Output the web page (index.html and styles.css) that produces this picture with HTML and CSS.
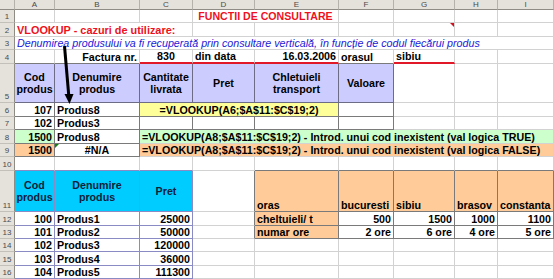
FILE: index.html
```html
<!DOCTYPE html>
<html>
<head>
<meta charset="utf-8">
<link rel="stylesheet" href="styles.css">
</head>
<body>
<div class="sheet">
  <!-- column headers -->
  <div class="c ch corner"></div>
  <div class="c ch">A</div><div class="c ch">B</div><div class="c ch">C</div><div class="c ch">D</div><div class="c ch">E</div><div class="c ch">F</div><div class="c ch">G</div><div class="c ch">H</div><div class="c ch">I</div>

  <!-- row 1 -->
  <div class="c rh">1</div>
  <div class="c"></div><div class="c"></div><div class="c"></div>
  <div class="c s2 m title">FUNCTII DE CONSULTARE</div>
  <div class="c"></div><div class="c"></div><div class="c"></div><div class="c"></div>

  <!-- row 2 -->
  <div class="c rh">2</div>
  <div class="c s3 sub">VLOOKUP - cazuri de utilizare:</div>
  <div class="c"></div><div class="c"></div><div class="c"></div>
  <div class="c"><span class="comment"></span></div>
  <div class="c"></div><div class="c"></div>

  <!-- row 3 -->
  <div class="c rh">3</div>
  <div class="c s9 note">Denumirea produsului va fi recuperată prin consultare verticală, în funcție de codul fiecărui produs</div>

  <!-- row 4 -->
  <div class="c rh">4</div>
  <div class="c db"></div>
  <div class="c r db">Factura nr.</div>
  <div class="c m red">830</div>
  <div class="c red">din data</div>
  <div class="c r red">16.03.2006</div>
  <div class="c db">orasul</div>
  <div class="c red">sibiu</div>
  <div class="c"></div><div class="c"></div>

  <!-- row 5 -->
  <div class="c rh">5</div>
  <div class="c hd">Cod produs</div>
  <div class="c hd">Denumire produs</div>
  <div class="c hd">Cantitate livrata</div>
  <div class="c hd">Pret</div>
  <div class="c hd">Chletuieli transport</div>
  <div class="c hd">Valoare</div>
  <div class="c"></div><div class="c"></div><div class="c"></div>

  <!-- row 6 -->
  <div class="c rh">6</div>
  <div class="c r bx">107</div>
  <div class="c bx">Produs8</div>
  <div class="c s3 m bx yellow">=VLOOKUP(A6;$A$11:$C$19;2)</div>
  <div class="c bx"></div>
  <div class="c"></div><div class="c"></div><div class="c"></div>

  <!-- row 7 -->
  <div class="c rh">7</div>
  <div class="c r bx">102</div>
  <div class="c bx">Produs3</div>
  <div class="c bx"></div><div class="c bx"></div><div class="c bx"></div><div class="c bx"></div>
  <div class="c"></div><div class="c"></div><div class="c"></div>

  <!-- row 8 -->
  <div class="c rh">8</div>
  <div class="c r bx green">1500</div>
  <div class="c bx">Produs8</div>
  <div class="c s7 green">=VLOOKUP(A8;$A$11:$C$19;2) - Introd. unui cod inexistent (val logica TRUE)</div>

  <!-- row 9 -->
  <div class="c rh">9</div>
  <div class="c r bx orange">1500</div>
  <div class="c m bx"><span class="errmark"></span>#N/A</div>
  <div class="c s7 orange">=VLOOKUP(A8;$A$11:$C$19;2) - Introd. unui cod inexistent (val logica FALSE)</div>

  <!-- row 10 -->
  <div class="c rh">10</div>
  <div class="c dbp"></div><div class="c dbp"></div><div class="c dbp"></div>
  <div class="c"></div>
  <div class="c db"></div><div class="c db"></div><div class="c db"></div><div class="c db"></div><div class="c db"></div>

  <!-- row 11 -->
  <div class="c rh">11</div>
  <div class="c hd cyan">Cod produs</div>
  <div class="c hd cyan">Denumire produs</div>
  <div class="c hd cyan">Pret</div>
  <div class="c dr"></div>
  <div class="c bx orange">oras</div>
  <div class="c bx orange">bucuresti</div>
  <div class="c bx orange">sibiu</div>
  <div class="c bx orange">brasov</div>
  <div class="c bx orange">constanta</div>

  <!-- row 12 -->
  <div class="c rh">12</div>
  <div class="c r bp">100</div><div class="c bp">Produs1</div><div class="c r bp">25000</div>
  <div class="c dr"></div>
  <div class="c bx orange">cheltuieli/ t</div>
  <div class="c r bx">500</div><div class="c r bx">1500</div><div class="c r bx">1000</div><div class="c r bx">1100</div>

  <!-- row 13 -->
  <div class="c rh">13</div>
  <div class="c r bp">101</div><div class="c bp">Produs2</div><div class="c r bp">50000</div>
  <div class="c dr"></div>
  <div class="c bx orange">numar ore</div>
  <div class="c r bx">2 ore</div><div class="c r bx">6 ore</div><div class="c r bx">4 ore</div><div class="c r bx">5 ore</div>

  <!-- row 14 -->
  <div class="c rh">14</div>
  <div class="c r bp">102</div><div class="c bp">Produs3</div><div class="c r bp">120000</div>
  <div class="c"></div><div class="c"></div><div class="c"></div><div class="c"></div><div class="c"></div><div class="c"></div>

  <!-- row 15 -->
  <div class="c rh">15</div>
  <div class="c r bp">103</div><div class="c bp">Produs4</div><div class="c r bp">36000</div>
  <div class="c"></div><div class="c"></div><div class="c"></div><div class="c"></div><div class="c"></div><div class="c"></div>

  <!-- row 16 -->
  <div class="c rh">16</div>
  <div class="c r bp">104</div><div class="c bp">Produs5</div><div class="c r bp">111300</div>
  <div class="c"></div><div class="c"></div><div class="c"></div><div class="c"></div><div class="c"></div><div class="c"></div>

  <svg class="arrow" width="554" height="279" viewBox="0 0 554 279">
    <line x1="64.5" y1="46" x2="68.8" y2="96" stroke="#000" stroke-width="3"/>
    <polygon points="69.5,104 64.5,94 73.5,94" fill="#000"/>
  </svg>
</div>
</body>
</html>
```

FILE: styles.css
```css
* { box-sizing: border-box; margin: 0; padding: 0; }
html, body { margin: 0; background: #fff; }
body { font-family: "Liberation Sans", Arial, sans-serif; }

.sheet {
  position: relative;
  display: grid;
  grid-template-columns: 15px 40px 85px 53px 62px 84px 55px 61px 43px 56px;
  grid-template-rows: 10px 13px 14px 13px 14px 39px 14px 13px 14px 13px 14px 41px 14px 13px 13px 14px 13px;
  width: 554px;
  height: 279px;
  overflow: hidden;
  font-size: 10.7px;
  font-weight: bold;
  color: #000;
}

.c {
  position: relative;
  display: flex;
  align-items: flex-end;
  padding: 0 2px 0 2px;
  line-height: 12px;
  white-space: nowrap;
  border-right: 1px solid #d2d2d2;
  border-bottom: 1px solid #d2d2d2;
}

.ch {
  background: #e4e2da;
  border-right: 1px solid #b4b2aa;
  border-bottom: 1px solid #8e8c84;
  justify-content: center;
  align-items: center;
  font-size: 8px;
  font-weight: normal;
  color: #4a4a4a;
  line-height: 9px;
}
.corner { background: #e4e2da; }

.rh {
  background: #e4e2da;
  border-right: 1px solid #8e8c84;
  border-bottom: 1px solid #c2c0b8;
  justify-content: center;
  font-size: 8px;
  font-weight: normal;
  color: #4a4a4a;
  line-height: 10px;
  padding: 0;
}

.s2 { grid-column: span 2; }
.s3 { grid-column: span 3; }
.s7 { grid-column: span 7; }
.s9 { grid-column: span 9; }

.r { justify-content: flex-end; }
.m { justify-content: center; }

.title { color: #ee1122; font-size: 10.6px; }
.sub { color: #ee1122; font-size: 10.9px; padding-left: 2px; }
.note { color: #1a1ad6; font-style: italic; font-weight: normal; font-size: 10.7px; }

.red { border-bottom: 2px solid #e01828; }
.db { border-bottom-color: #7a7a7a; }
.dbp { border-bottom-color: #8a8ac4; }
.dr { border-right-color: #7a7a7a; }

.hd {
  background: #ccccff;
  justify-content: center;
  align-items: center;
  text-align: center;
  white-space: normal;
  line-height: 12.5px;
  border-right: 1px solid #6c6c86;
  border-bottom: 1px solid #6c6c86;
}

.bx { border-right-color: #7a7a7a; border-bottom-color: #7a7a7a; }
.bp { border-right-color: #8a8ac4; border-bottom-color: #8a8ac4; }

.yellow { background: #ffff99; }
.green { background: #ccffcc; }
.orange { background: #ffcc99; }
.cyan {
  background: #00ccff;
  color: #10203a;
  border-right-color: #8a8ac4;
  border-bottom-color: #8a8ac4;
}

.comment {
  position: absolute;
  top: 0;
  right: 0;
  width: 0;
  height: 0;
  border-left: 4px solid transparent;
  border-top: 4px solid #d01020;
}

.errmark {
  position: absolute;
  top: 0;
  left: 0;
  width: 0;
  height: 0;
  border-right: 4px solid transparent;
  border-top: 4px solid #108010;
}

.arrow {
  position: absolute;
  left: 0;
  top: 0;
  pointer-events: none;
}
```
